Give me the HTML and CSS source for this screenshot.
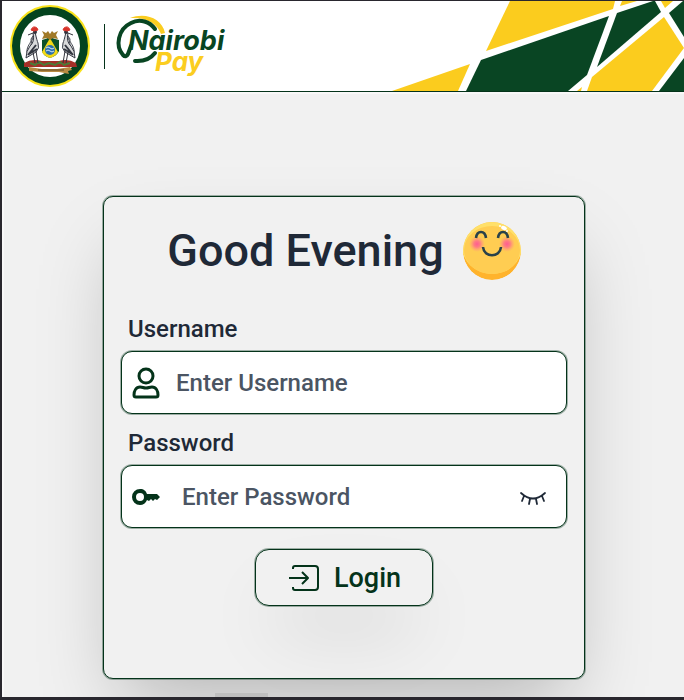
FILE: index.html
```html
<!DOCTYPE html>
<html lang="en">
<head>
<meta charset="utf-8">
<meta name="viewport" content="width=device-width, initial-scale=1">
<title>Nairobi Pay</title>
<link rel="stylesheet" href="styles.css">
</head>
<body>
<header class="header">
  <svg class="crest" viewBox="0 0 80 82" role="img" aria-label="Nairobi City County">
    <ellipse cx="40" cy="41" rx="40" ry="41" fill="#f9e21a"/>
    <ellipse cx="40" cy="41" rx="38" ry="39" fill="#04431f"/>
    <ellipse cx="40" cy="41" rx="30" ry="31" fill="#fff"/>
    <path d="M14 58Q22 53 32 56L49 56Q58 53 66 58L67 62H14Z" fill="#a52f28"/>
    <path d="M20 58l5 2 4-3 5 3 5-2 6 2 5-3 4 3 6-2" fill="none" stroke="#4c7a36" stroke-width="2"/>
    <g id="crane">
      <path d="M25 28C21 36 20 41 22 46C20 50 16 49 17 45C18 39 22 37 21 34Z" fill="#eee" stroke="#434750"/>
      <path d="M25 27Q27 36 28 38Q30 43 26 47L16 53Q16 46 20 41Q25 37 23 28Z" fill="#d9dadb" stroke="#343843"/>
      <path d="M18 50L26 40M19 49l8-5" stroke="#333741" stroke-width="2"/>
      <path d="M26 46l2 12M23 47l2 11" stroke="#34343c"/>
      <circle cx="25" cy="27" r="2" fill="#32323c"/>
      <path d="M21 25q2-5 6-2l1 2-4 1z" fill="#d8342b" stroke="#d8342b"/>
      <path d="M23 28l-5 2" stroke="#34343c"/>
    </g>
    <use href="#crane" transform="matrix(-1 0 0 1 81 0)"/>
    <path d="M32 35Q36 34 40 32Q44 34 49 35V46Q47 51 40 53Q33 51 32 46Z" fill="#0b512a"/>
    <path d="M40 33L48 47Q46 51 40 53Q34 51 32 47Z" fill="#f3d916"/>
    <circle cx="40" cy="45" r="5" fill="#2b70af"/>
    <path d="M36 43q2-2 4 0t4 0M36 46q2-2 4 0t4 0" stroke="#d6e9f5" fill="none"/>
    <path d="M32 26l4 2 2-2 2 3 2-3 2 2 4-2-2 4 2 4-5-1-3 2-3-2-5 1 2-4z" fill="#a17a28"/>
    <path d="M19 62L32 64H47L60 62L62 65L58 66L59 69L49 67H32L19 66Z" fill="#b98a42"/>
    <path d="M28 65h26" stroke="#614722"/>
  </svg>
  <span class="divider"></span>
  <svg class="wordmark" viewBox="0 0 112 64" role="img" aria-label="Nairobi Pay">
    <path d="M13 4C28-2 45 4 48 19L44 20C40 9 29 3 13 4Z" fill="#fbcd20"/>
    <path d="M38 15C33 8 23 4 14 9C1 15-2 32 6 41Q9 44 11 40L14 32" fill="none" stroke="#084522" stroke-width="4" stroke-linecap="round" stroke-linejoin="round"/>
    <path d="M18 47Q31 48 38 39" fill="none" stroke="#084522" stroke-width="4" stroke-linecap="round"/>
    <text class="word word-green" x="11" y="36">Nairobi</text>
    <text class="word word-yellow" x="38" y="57">Pay</text>
  </svg>
  <svg class="pattern" viewBox="0 0 304 90" aria-hidden="true">
    <g fill="#fbcc1e">
      <path d="M130 0L106 50L233 8L235 0Z"/>
      <path d="M242 0L240 5L257 0Z"/>
      <path d="M12 90L90 63L78 90Z"/>
      <path d="M284 16L304 47L272 90H207L212 76Z"/>
      <path d="M197 90L202 86L201 90Z"/>
      <path d="M281 0H293L285 7Z"/>
    </g>
    <g fill="#094523">
      <path d="M101 59L229 15L207 74L188 90H86Z"/>
      <path d="M237 12L273 0H275L281 11L217 66Z"/>
      <path d="M303 0H304V36L289 12Z"/>
      <path d="M304 57V90H279Z"/>
    </g>
  </svg>
</header>
<main class="page">
  <form class="card">
    <div class="greeting">
      <h1>Good Evening</h1>
      <svg class="emoji" viewBox="0 0 58 58" role="img" aria-label="Smiling face">
        <defs>
          <radialGradient id="blush"><stop offset="0" stop-color="#ff5c91"/><stop offset=".4" stop-color="#ff6f8a" stop-opacity=".85"/><stop offset="1" stop-color="#ff987c" stop-opacity="0"/></radialGradient>
          <clipPath id="face"><circle cx="29" cy="29" r="29"/></clipPath>
        </defs>
        <g clip-path="url(#face)">
          <circle cx="29" cy="29" r="29" fill="#ffb32c"/>
          <ellipse cx="29" cy="24" rx="30" ry="28" fill="#ffe06a"/>
          <ellipse cx="29" cy="28" rx="28" ry="24" fill="#ffcd52"/>
        </g>
        <circle cx="14" cy="22" r="8" fill="url(#blush)"/>
        <circle cx="44" cy="22" r="8" fill="url(#blush)"/>
        <path d="M13 16C14 8 22 8 23 16M35 16C36 8 44 8 45 16M20 25C21 36 37 36 38 25" fill="none" stroke="#29424a" stroke-width="2.6"/>
        <ellipse cx="41" cy="6" rx="3" ry="2" transform="rotate(25 41 6)" fill="#fff"/>
        <circle cx="44" cy="9" r="1" fill="#fff"/><circle cx="37" cy="4" r="1" fill="#fff"/>
      </svg>
    </div>
    <label class="label" for="username">Username</label>
    <div class="field">
      <svg class="icon" viewBox="0 0 28 32" aria-hidden="true"><g fill="none" stroke="#04331a" stroke-width="3" stroke-linejoin="round"><circle cx="14" cy="9" r="7"/><path d="M8 20C4 20 2 24 2 28Q2 30 4 30H24Q26 30 26 28C26 24 24 20 20 20C17 20 17 21 14 21S11 20 8 20Z"/></g></svg>
      <input id="username" type="text" placeholder="Enter Username">
    </div>
    <label class="label" for="password">Password</label>
    <div class="field field-password">
      <svg class="icon" viewBox="0 0 28 32" aria-hidden="true"><path fill="#04331a" fill-rule="evenodd" d="M8 8C12 8 14 10 15 13H25L28 16L25 19L23 18L21 20L19 18L17 20L15 19C14 22 11 24 8 24A8 8 0 0 1 8 8ZM8 12A4 4 0 1 0 8 20A4 4 0 1 0 8 12Z"/></svg>
      <input id="password" type="password" placeholder="Enter Password">
      <button class="reveal" type="button" aria-label="Show password">
        <svg viewBox="0 0 26 16" aria-hidden="true"><path d="M1 4Q13 15 25 4M4 7L2 12M10 10L9 15M16 10L17 15M22 7L24 12" fill="none" stroke="#1f2937" stroke-width="1.8" stroke-linecap="round"/></svg>
      </button>
    </div>
    <button class="login" type="submit">
      <svg viewBox="0 0 30 28" aria-hidden="true"><path d="M4 5V4Q4 2 6 2H26Q29 2 29 5V23Q29 26 26 26H6Q4 26 4 24V23M0 14H19M13 8L19 14L13 20" fill="none" stroke="#04331a" stroke-width="2" stroke-linejoin="round"/></svg>
      Login
    </button>
  </form>
  <div class="tab"></div>
</main>
</body>
</html>
```
FILE: styles.css
```css
* { box-sizing: border-box; }

body {
  margin: 0;
  min-height: 100vh;
  display: flex;
  flex-direction: column;
  border: solid #29272e;
  border-width: 1px 0 3px 2px;
  background: #f1f1f1;
  color: #1f2937;
  font-family: Roboto, "Liberation Sans", sans-serif;
  font-weight: 500;
}

.header {
  display: flex;
  align-items: center;
  height: 91px;
  padding-left: 8px;
  background: #fff;
  border-bottom: 1px solid #04331a;
}

.crest { width: 80px; height: 82px; flex: none; }

.divider {
  width: 1px;
  height: 45px;
  margin: 0 12px 0 14px;
  background: #04331a;
}

.wordmark { width: 112px; height: 64px; flex: none; overflow: visible; }

.word {
  font-family: Inter, sans-serif;
  font-style: italic;
  font-weight: 700;
}
.word-green { fill: #084522; font-size: 27px; }
.word-yellow { fill: #fbcd20; font-size: 26px; }

.pattern { width: 304px; height: 90px; margin-left: auto; flex: none; }

.page {
  flex: 1;
  padding: 102px 16px 0;
  border: solid #f8f8f8;
  border-width: 2px 0 0 2px;
  overflow: hidden;
}

.card {
  display: flex;
  flex-direction: column;
  max-width: 482px;
  margin: 0 auto;
  padding: 25px 17px 72px;
  border: 1px solid #04331a;
  border-radius: 10px;
  background: #f1f1f1;
  box-shadow: 0 0 0 1px rgba(4, 51, 26, 0.35), 0 38px 75px -18px rgba(0, 0, 0, 0.25);
}

.greeting {
  display: flex;
  align-items: center;
  justify-content: center;
  gap: 19px;
  height: 58px;
  margin-bottom: 31px;
}

h1 {
  margin: 0;
  font-size: 45px;
  line-height: 58px;
  font-weight: 500;
  white-space: nowrap;
}

.emoji { width: 58px; height: 58px; flex: none; }

.label {
  margin: 0 7px 4px;
  font-size: 24px;
  line-height: 36px;
}

.field {
  display: flex;
  align-items: center;
  gap: 16px;
  height: 63px;
  margin-bottom: 11px;
  padding: 0 20px 0 10px;
  border: 1px solid #04331a;
  border-radius: 11px;
  background: #fff;
  box-shadow: 0 0 0 1px rgba(4, 51, 26, 0.35);
}

.field-password { gap: 22px; margin-bottom: 21px; }

.icon { width: 28px; height: 32px; flex: none; }

input {
  flex: 1;
  min-width: 0;
  padding: 0;
  border: 0;
  outline: 0;
  background: transparent;
  color: #1f2937;
  font: inherit;
  font-size: 24px;
  line-height: 36px;
}

input::placeholder { color: #4b5563; opacity: 1; }

button { color: #04331a; font: inherit; cursor: pointer; }

.reveal {
  display: flex;
  padding: 0;
  border: 0;
  background: transparent;
}
.reveal svg { width: 26px; height: 16px; }

.login {
  display: flex;
  align-items: center;
  align-self: center;
  gap: 15px;
  height: 57px;
  padding: 0 31px 0 33px;
  border: 1px solid #04331a;
  border-radius: 14px;
  background: #f1f1f1;
  font-size: 27px;
  box-shadow: 0 0 0 1px rgba(4, 51, 26, 0.35), 0 38px 75px -18px rgba(0, 0, 0, 0.2);
}
.login svg { width: 30px; height: 28px; }

.tab {
  width: 53px;
  height: 4px;
  margin: 14px 0 0 195px;
  background: #bfbfbf;
}
```
